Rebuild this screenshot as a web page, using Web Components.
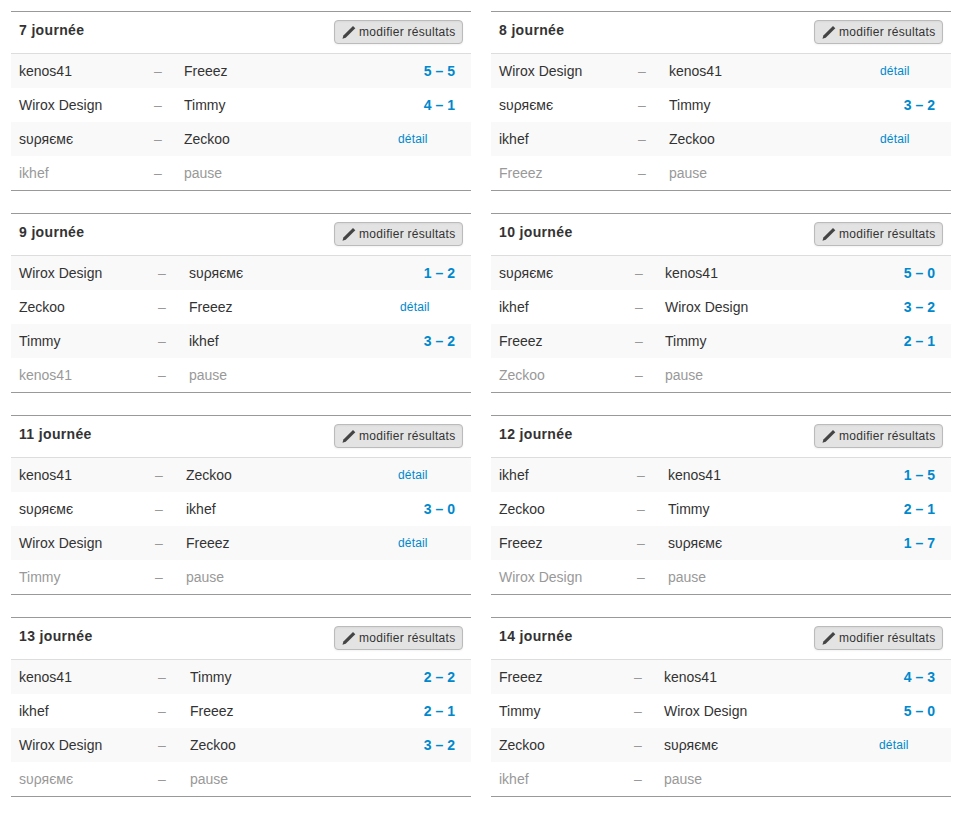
<!DOCTYPE html>
<html lang="fr">
<head>
<meta charset="utf-8">
<title>journées</title>
<style>
  body { margin: 0; background: #fff; color: #333; font-family: "Liberation Sans", Arial, sans-serif; font-size: 14px; }
</style>
</head>
<body>
<match-board>
  <match-day dash="143" away="173" detail="387"><span slot="label">7 journée</span>
    <match-row home="kenos41" away="Freeez" score="5 – 5"></match-row>
    <match-row home="Wirox Design" away="Timmy" score="4 – 1"></match-row>
    <match-row home="ѕυρяємє" away="Zeckoo"></match-row>
    <match-row home="ikhef" away="pause" pause></match-row>
  </match-day>
  <match-day dash="147" away="178" detail="389"><span slot="label">8 journée</span>
    <match-row home="Wirox Design" away="kenos41"></match-row>
    <match-row home="ѕυρяємє" away="Timmy" score="3 – 2"></match-row>
    <match-row home="ikhef" away="Zeckoo"></match-row>
    <match-row home="Freeez" away="pause" pause></match-row>
  </match-day>
  <match-day dash="147" away="178" detail="389"><span slot="label">9 journée</span>
    <match-row home="Wirox Design" away="ѕυρяємє" score="1 – 2"></match-row>
    <match-row home="Zeckoo" away="Freeez"></match-row>
    <match-row home="Timmy" away="ikhef" score="3 – 2"></match-row>
    <match-row home="kenos41" away="pause" pause></match-row>
  </match-day>
  <match-day dash="144" away="174" detail="387"><span slot="label">10 journée</span>
    <match-row home="ѕυρяємє" away="kenos41" score="5 – 0"></match-row>
    <match-row home="ikhef" away="Wirox Design" score="3 – 2"></match-row>
    <match-row home="Freeez" away="Timmy" score="2 – 1"></match-row>
    <match-row home="Zeckoo" away="pause" pause></match-row>
  </match-day>
  <match-day dash="144" away="175" detail="387"><span slot="label">11 journée</span>
    <match-row home="kenos41" away="Zeckoo"></match-row>
    <match-row home="ѕυρяємє" away="ikhef" score="3 – 0"></match-row>
    <match-row home="Wirox Design" away="Freeez"></match-row>
    <match-row home="Timmy" away="pause" pause></match-row>
  </match-day>
  <match-day dash="146" away="177" detail="387"><span slot="label">12 journée</span>
    <match-row home="ikhef" away="kenos41" score="1 – 5"></match-row>
    <match-row home="Zeckoo" away="Timmy" score="2 – 1"></match-row>
    <match-row home="Freeez" away="ѕυρяємє" score="1 – 7"></match-row>
    <match-row home="Wirox Design" away="pause" pause></match-row>
  </match-day>
  <match-day dash="147" away="179" detail="387"><span slot="label">13 journée</span>
    <match-row home="kenos41" away="Timmy" score="2 – 2"></match-row>
    <match-row home="ikhef" away="Freeez" score="2 – 1"></match-row>
    <match-row home="Wirox Design" away="Zeckoo" score="3 – 2"></match-row>
    <match-row home="ѕυρяємє" away="pause" pause></match-row>
  </match-day>
  <match-day dash="143" away="173" detail="388"><span slot="label">14 journée</span>
    <match-row home="Freeez" away="kenos41" score="4 – 3"></match-row>
    <match-row home="Timmy" away="Wirox Design" score="5 – 0"></match-row>
    <match-row home="Zeckoo" away="ѕυρяємє"></match-row>
    <match-row home="ikhef" away="pause" pause></match-row>
  </match-day>
</match-board>

<script>
const boardTemplate = document.createElement('template');
boardTemplate.innerHTML = `
  <style>
    :host {
      display: grid;
      grid-template-columns: 460px 460px;
      column-gap: 20px;
      row-gap: 22px;
      padding: 11px 0 0 11px;
    }
  </style>
  <slot></slot>
`;

class MatchBoard extends HTMLElement {
  constructor() {
    super();
    this.attachShadow({ mode: 'open' });
    this.shadowRoot.appendChild(boardTemplate.content.cloneNode(true));
  }
}

const dayTemplate = document.createElement('template');
dayTemplate.innerHTML = `
  <style>
    :host {
      display: block;
      height: 180px;
      box-sizing: border-box;
      border-top: 1px solid #999;
      border-bottom: 1px solid #999;
    }
    header {
      display: flex;
      justify-content: space-between;
      align-items: flex-start;
      box-sizing: border-box;
      height: 42px;
      padding: 8px 8px 0 8px;
      border-bottom: 1px solid #ddd;
    }
    h3 {
      margin: 0;
      font-size: 14px;
      line-height: 20px;
      font-weight: bold;
      letter-spacing: .35px;
      color: #333;
    }
    button {
      display: flex;
      align-items: center;
      gap: 3px;
      box-sizing: border-box;
      width: 129px;
      height: 24px;
      padding: 0 0 0 7px;
      border: 1px solid #bbb;
      border-radius: 4px;
      background: #e3e3e3;
      box-shadow: inset 0 1px 2px rgba(0,0,0,.05), 0 1px 2px rgba(0,0,0,.05);
      color: #333;
      font: 12px/18px "Liberation Sans", Arial, sans-serif;
      letter-spacing: .28px;
    }
    svg { width: 14px; height: 14px; flex: none; }
  </style>
  <header>
    <h3><slot name="label"></slot></h3>
    <button>
      <svg viewBox="0 0 14 14"><path fill="#444" d="M11 .9l2.3 2.3-9.6 9.6-3.2.9.9-3.2z"/></svg>
      modifier résultats
    </button>
  </header>
  <slot></slot>
`;

class MatchDay extends HTMLElement {
  constructor() {
    super();
    this.attachShadow({ mode: 'open' });
    this.shadowRoot.appendChild(dayTemplate.content.cloneNode(true));
  }

  connectedCallback() {
    // column starts differ per card, the rows read them through custom properties
    this.style.setProperty('--dash-x', this.getAttribute('dash') + 'px');
    this.style.setProperty('--away-x', this.getAttribute('away') + 'px');
    this.style.setProperty('--detail-x', this.getAttribute('detail') + 'px');
  }
}

const rowTemplate = document.createElement('template');
rowTemplate.innerHTML = `
  <style>
    :host {
      display: grid;
      grid-template-columns: var(--dash-x) calc(var(--away-x) - var(--dash-x)) calc(var(--detail-x) - var(--away-x)) 1fr;
      height: 34px;
      line-height: 34px;
      font-size: 14px;
      color: #333;
    }
    :host(:nth-of-type(odd)) { background: #f9f9f9; }
    :host([pause]) { color: #999; }
    .home { padding-left: 8px; }
    .dash { color: #999; }
    .score {
      padding-right: 16px;
      text-align: right;
      font-weight: bold;
      color: #0088cc;
    }
    .detail {
      font-size: 12px;
      letter-spacing: .15px;
      color: #0088cc;
    }
  </style>
  <span class="home"></span>
  <span class="dash">–</span>
  <span class="away"></span>
`;

class MatchRow extends HTMLElement {
  constructor() {
    super();
    this.attachShadow({ mode: 'open' });
    this.shadowRoot.appendChild(rowTemplate.content.cloneNode(true));
  }

  connectedCallback() {
    const root = this.shadowRoot;
    root.querySelector('.home').textContent = this.getAttribute('home');
    root.querySelector('.away').textContent = this.getAttribute('away');
    if (this.hasAttribute('pause')) return;

    const result = document.createElement('span');
    if (this.hasAttribute('score')) {
      result.className = 'score';
      result.textContent = this.getAttribute('score');
    } else {
      result.className = 'detail';
      result.textContent = 'détail';
    }
    root.appendChild(result);
  }
}

customElements.define('match-board', MatchBoard);
customElements.define('match-day', MatchDay);
customElements.define('match-row', MatchRow);
</script>
</body>
</html>
